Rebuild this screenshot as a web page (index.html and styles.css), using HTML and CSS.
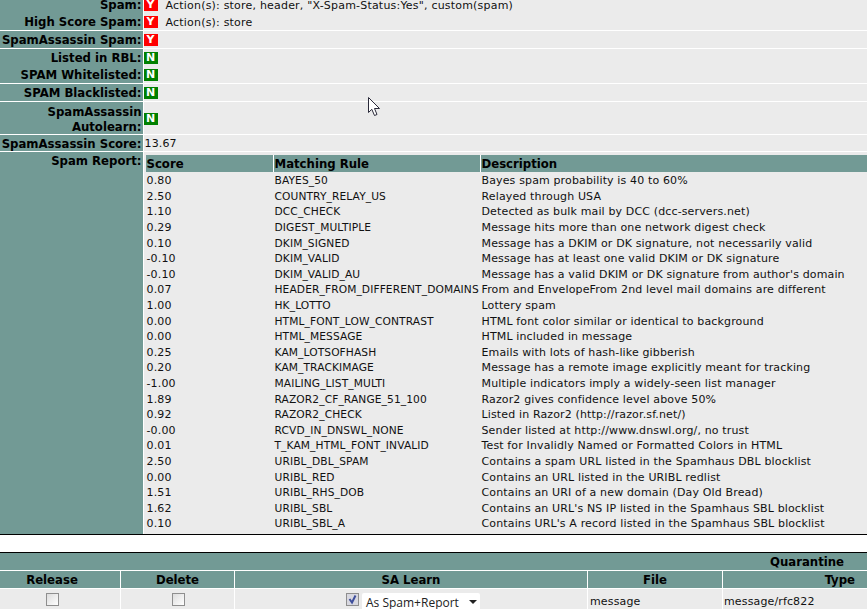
FILE: index.html
```html
<!DOCTYPE html>
<html lang="en">
<head>
<meta charset="utf-8">
<title>Message detail</title>
<link rel="stylesheet" href="styles.css">
</head>
<body>
<div class="page">
<table class="detail">
<tr class="h17"><th>Spam:</th><td><span class="flag y">Y</span><span class="act">Action(s): store, header, "X-Spam-Status:Yes", custom(spam)</span></td></tr>
<tr class="h17 sep"><th>High Score Spam:</th><td><span class="flag y">Y</span><span class="act">Action(s): store</span></td></tr>
<tr class="h17 sep"><th>SpamAssassin Spam:</th><td><span class="flag y">Y</span></td></tr>
<tr class="h17"><th>Listed in RBL:</th><td><span class="flag n">N</span></td></tr>
<tr class="h17 sep"><th>SPAM Whitelisted:</th><td><span class="flag n">N</span></td></tr>
<tr class="h17 sep"><th>SPAM Blacklisted:</th><td><span class="flag n">N</span></td></tr>
<tr class="h32 sep"><th>SpamAssassin Autolearn:</th><td><span class="flag n">N</span></td></tr>
<tr class="h16 sep"><th>SpamAssassin Score:</th><td class="score">13.67</td></tr>
<tr><th>Spam Report:</th><td class="report">
<div class="rules">
<div class="rule head"><b>Score</b><b>Matching Rule</b><b>Description</b></div>
<div class="rule"><span>0.80</span><span>BAYES_50</span><span>Bayes spam probability is 40 to 60%</span></div>
<div class="rule"><span>2.50</span><span>COUNTRY_RELAY_US</span><span>Relayed through USA</span></div>
<div class="rule"><span>1.10</span><span>DCC_CHECK</span><span>Detected as bulk mail by DCC (dcc-servers.net)</span></div>
<div class="rule"><span>0.29</span><span>DIGEST_MULTIPLE</span><span>Message hits more than one network digest check</span></div>
<div class="rule"><span>0.10</span><span>DKIM_SIGNED</span><span>Message has a DKIM or DK signature, not necessarily valid</span></div>
<div class="rule"><span>-0.10</span><span>DKIM_VALID</span><span>Message has at least one valid DKIM or DK signature</span></div>
<div class="rule"><span>-0.10</span><span>DKIM_VALID_AU</span><span>Message has a valid DKIM or DK signature from author's domain</span></div>
<div class="rule"><span>0.07</span><span>HEADER_FROM_DIFFERENT_DOMAINS</span><span>From and EnvelopeFrom 2nd level mail domains are different</span></div>
<div class="rule"><span>1.00</span><span>HK_LOTTO</span><span>Lottery spam</span></div>
<div class="rule"><span>0.00</span><span>HTML_FONT_LOW_CONTRAST</span><span>HTML font color similar or identical to background</span></div>
<div class="rule"><span>0.00</span><span>HTML_MESSAGE</span><span>HTML included in message</span></div>
<div class="rule"><span>0.25</span><span>KAM_LOTSOFHASH</span><span>Emails with lots of hash-like gibberish</span></div>
<div class="rule"><span>0.20</span><span>KAM_TRACKIMAGE</span><span>Message has a remote image explicitly meant for tracking</span></div>
<div class="rule"><span>-1.00</span><span>MAILING_LIST_MULTI</span><span>Multiple indicators imply a widely-seen list manager</span></div>
<div class="rule"><span>1.89</span><span>RAZOR2_CF_RANGE_51_100</span><span>Razor2 gives confidence level above 50%</span></div>
<div class="rule"><span>0.92</span><span>RAZOR2_CHECK</span><span>Listed in Razor2 (http://razor.sf.net/)</span></div>
<div class="rule"><span>-0.00</span><span>RCVD_IN_DNSWL_NONE</span><span>Sender listed at http://www.dnswl.org/, no trust</span></div>
<div class="rule"><span>0.01</span><span>T_KAM_HTML_FONT_INVALID</span><span>Test for Invalidly Named or Formatted Colors in HTML</span></div>
<div class="rule"><span>2.50</span><span>URIBL_DBL_SPAM</span><span>Contains a spam URL listed in the Spamhaus DBL blocklist</span></div>
<div class="rule"><span>0.00</span><span>URIBL_RED</span><span>Contains an URL listed in the URIBL redlist</span></div>
<div class="rule"><span>1.51</span><span>URIBL_RHS_DOB</span><span>Contains an URI of a new domain (Day Old Bread)</span></div>
<div class="rule"><span>1.62</span><span>URIBL_SBL</span><span>Contains an URL's NS IP listed in the Spamhaus SBL blocklist</span></div>
<div class="rule"><span>0.10</span><span>URIBL_SBL_A</span><span>Contains URL's A record listed in the Spamhaus SBL blocklist</span></div>
</div>
</td></tr>
</table>
<div class="gap"></div>
<div class="quarantine">
<div class="qtitle"><b>Quarantine</b></div>
<div class="qrow qhead"><b class="q1">Release</b><b>Delete</b><b>SA Learn</b><b>File</b><b>Type</b></div>
<div class="qrow qbody">
<div class="qc q1"><span class="cb"></span></div>
<div class="qc q2"><span class="cb"></span></div>
<div class="qc q3"><span class="cb on"><svg width="11" height="11" viewBox="0 0 11 11"><path d="M2.500 5 5 8.500 8.500 1.500" fill="none" stroke="#3f4f9c" stroke-width="2"/></svg></span><span class="sel">As Spam+Report<svg class="arrow" width="8" height="4" viewBox="0 0 8 4"><path d="M0 0h8L4 4z" fill="#222"/></svg></span></div>
<div class="ql">message</div>
<div class="ql">message/rfc822</div>
</div>
</div>
</div>
<svg class="cursor" width="14" height="21" viewBox="0 0 14 21"><path d="M1.500 1.500V16.500L4.800 13.300 7.500 19.500 10 18.500 7.500 12.500H12.500Z" fill="#fff" stroke="#2a2a3a" stroke-width="1"/></svg>
</body>
</html>
```
FILE: styles.css
```css
html, body { margin: 0; padding: 0; background: #fff; }
body { width: 867px; height: 609px; overflow: hidden; position: relative; font: 11px/13px "DejaVu Sans", Verdana, sans-serif; letter-spacing: 0.14px; color: #111; }
.page { margin-top: -4px; }
.detail { width: 867px; border-collapse: collapse; table-layout: fixed; }
.detail th { width: 143px; box-sizing: border-box; background: #729a95; color: #000; font-family: "DejaVu Sans Condensed", "DejaVu Sans", sans-serif; font-size: 13px; line-height: 15px; font-weight: bold; letter-spacing: 0; text-align: right; vertical-align: top; padding: 1px 1px 0 0; border-right: 1px solid #fff; }
.detail td { background: #ebebeb; padding: 0; vertical-align: middle; }
.detail td.score { padding-left: 1px; }
.h17 th, .h17 td { height: 17px; }
.h16 th, .h16 td { height: 16px; }
.h32 th, .h32 td { height: 32px; }
.h32 th { vertical-align: middle; }
.sep th, .sep td { border-bottom: 1px solid #fff; }
.flag { display: inline-block; width: 14px; height: 12px; line-height: 12px; text-align: center; vertical-align: middle; font-weight: bold; font-size: 11px; letter-spacing: 0; color: #fff; margin-right: 8px; }
.flag.y { background: #f00; }
.flag.n { background: #008000; }
.act { vertical-align: middle; letter-spacing: 0.2px; }
.detail td.report { padding: 3px 0 1.700px 2px; vertical-align: top; }
.rule { display: grid; grid-template-columns: 128px 207px 1fr; height: 15.6px; line-height: 15.6px; white-space: nowrap; }
.rule span { padding-left: 1px; }
.rule span:nth-child(2) { font-size: 10.67px; letter-spacing: 0.1px; }
.rule.head { height: 17px; line-height: 17px; margin-bottom: 1.300px; background: #fff; }
.rule.head b { background: #729a95; color: #000; font-family: "DejaVu Sans Condensed", "DejaVu Sans", sans-serif; font-size: 13px; letter-spacing: 0; padding-left: 1px; margin-right: 1px; }
.rule.head b:last-child { margin-right: 0; }
.gap { height: 17px; border-top: 1px solid #000; border-bottom: 1px solid #000; background: #fff; }
.quarantine b { color: #000; font-family: "DejaVu Sans Condensed", "DejaVu Sans", sans-serif; font-size: 13px; letter-spacing: 0; }
.qtitle { height: 17px; line-height: 17px; background: #729a95; text-align: right; padding-right: 23px; border-bottom: 1px solid #fff; }
.qrow { display: grid; grid-template-columns: 121px 114px 353px 135px 1fr; }
.qhead { height: 17px; line-height: 17px; background: #729a95; border-bottom: 1px solid #fff; }
.qhead b { text-align: center; border-right: 1px solid #fff; }
.qhead b.q1 { padding-right: 16px; }
.qhead b:last-child { border-right: 0; text-align: right; padding-right: 12px; }
.qbody { height: 22px; background: #ebebeb; }
.qc { display: flex; justify-content: center; align-items: flex-start; gap: 3px; height: 22px; border-right: 1px solid #fff; padding-top: 4px; box-sizing: border-box; }
.qc.q1 { padding-right: 16px; }
.qc.q2 { padding-left: 1px; }
.qc.q3 { padding-left: 4px; }
.ql { line-height: 25px; padding-left: 2px; border-right: 1px solid #fff; }
.ql:last-child { border-right: 0; padding-left: 1px; }
.cb { display: inline-flex; width: 13px; height: 13px; box-sizing: border-box; border: 1px solid #8e8e8e; background: linear-gradient(135deg, #dcdcdc, #fff); }
.cb.on { background: #d8d8e0; }
.sel { display: inline-flex; align-items: center; justify-content: space-between; width: 118px; height: 19px; box-sizing: border-box; padding: 0 3px 0 4px; background: #fff; border-radius: 2px; font: 12px "Open Sans", sans-serif; letter-spacing: 0; color: #222; }
.cursor { position: absolute; left: 367px; top: 96px; }
```
